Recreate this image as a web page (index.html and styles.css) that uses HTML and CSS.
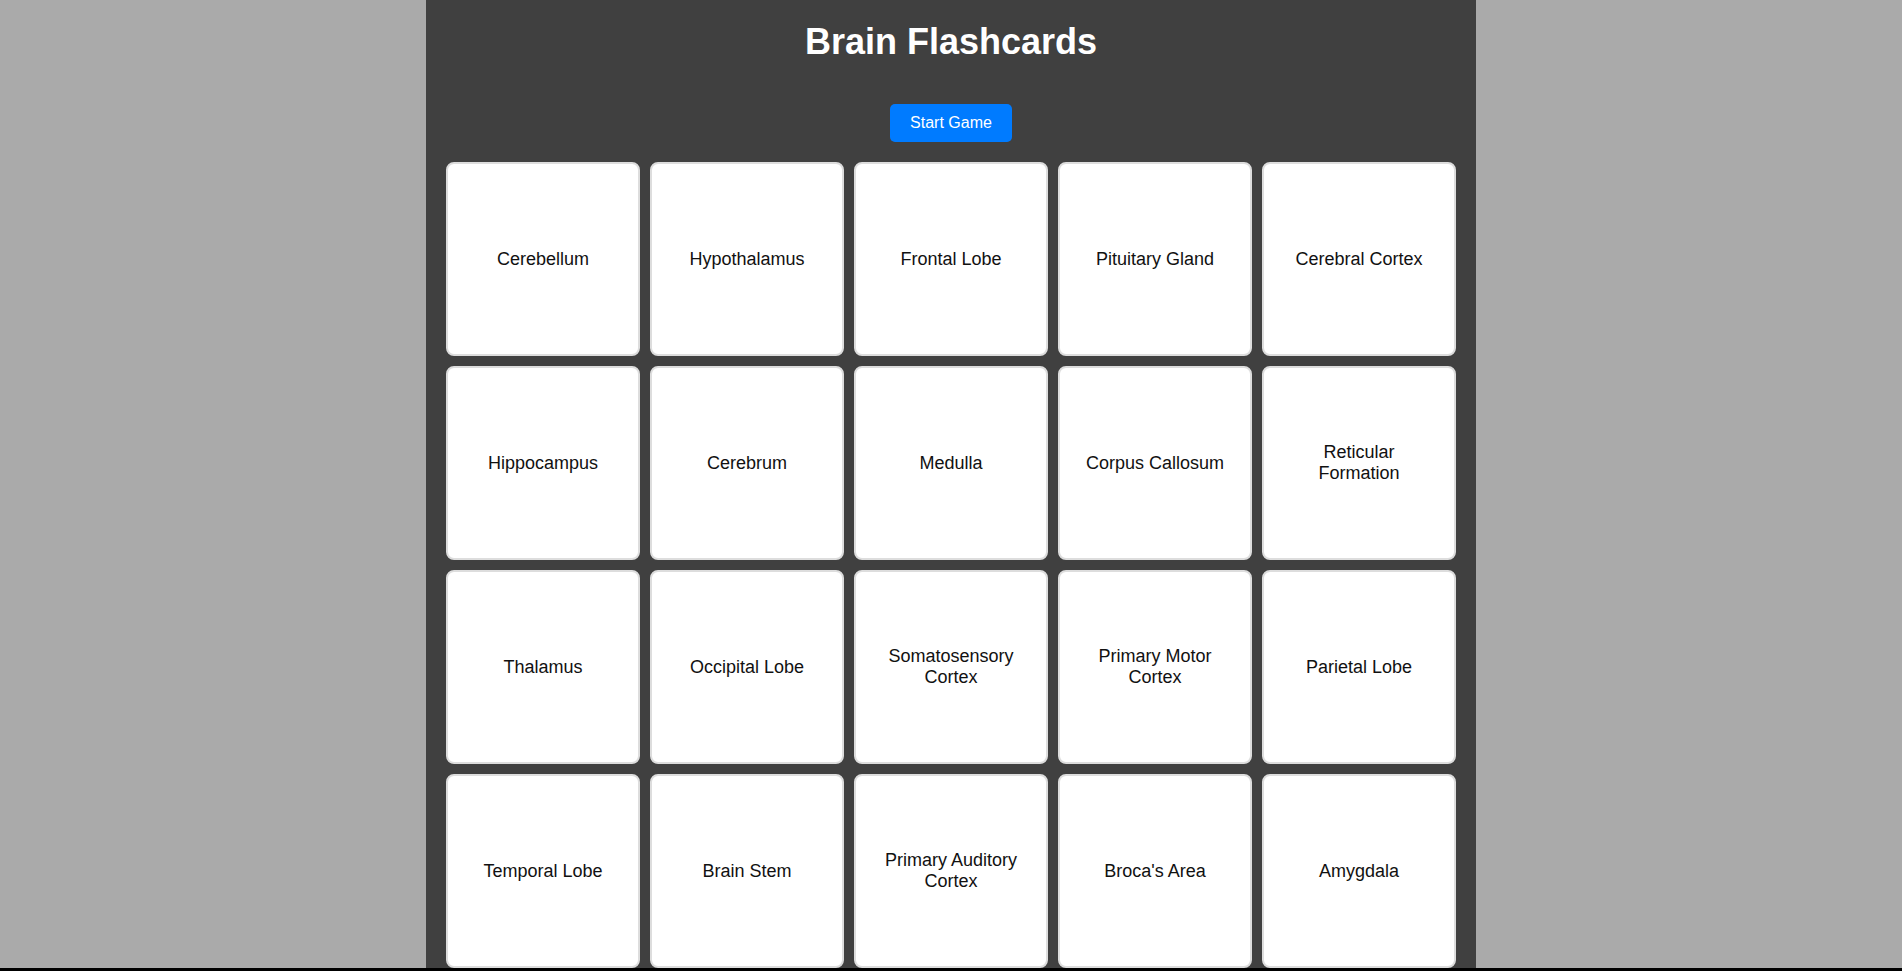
FILE: index.html
```html
<!DOCTYPE html>
<html lang="en">
<head>
<meta charset="utf-8">
<title>Brain Flashcards</title>
<link rel="stylesheet" href="styles.css">
</head>
<body>
<div class="container">
  <h1 class="title">Brain Flashcards</h1>
  <div class="controls">
    <button class="start-btn" type="button">Start Game</button>
  </div>
  <div class="grid">
    <div class="card">Cerebellum</div>
    <div class="card">Hypothalamus</div>
    <div class="card">Frontal Lobe</div>
    <div class="card">Pituitary Gland</div>
    <div class="card">Cerebral Cortex</div>
    <div class="card">Hippocampus</div>
    <div class="card">Cerebrum</div>
    <div class="card">Medulla</div>
    <div class="card">Corpus Callosum</div>
    <div class="card">Reticular Formation</div>
    <div class="card">Thalamus</div>
    <div class="card">Occipital Lobe</div>
    <div class="card">Somatosensory Cortex</div>
    <div class="card">Primary Motor Cortex</div>
    <div class="card">Parietal Lobe</div>
    <div class="card">Temporal Lobe</div>
    <div class="card">Brain Stem</div>
    <div class="card">Primary Auditory Cortex</div>
    <div class="card">Broca's Area</div>
    <div class="card">Amygdala</div>
  </div>
</div>
</body>
</html>
```

FILE: styles.css
```css
html {
  background: #000;
}

body {
  margin: 0;
  background: #aaaaaa;
  font-family: "Liberation Sans", Arial, sans-serif;
}

.container {
  width: 1050px;
  margin: 0 auto;
  box-sizing: border-box;
  padding: 21px 20px 0;
  background: #404040;
}

.title {
  margin: 0;
  font-size: 36px;
  font-weight: bold;
  color: #fff;
  text-align: center;
  line-height: 41px;
}

.controls {
  display: flex;
  justify-content: center;
  margin-top: 42px;
}

.start-btn {
  font-family: "Liberation Sans", Arial, sans-serif;
  font-size: 16px;
  line-height: 18px;
  padding: 10px 20px;
  color: #fff;
  background: #007bff;
  border: none;
  border-radius: 5px;
  cursor: pointer;
}

.grid {
  margin-top: 20px;
  display: grid;
  grid-template-columns: repeat(5, 1fr);
  gap: 10px;
}

.card {
  box-sizing: border-box;
  height: 194px;
  padding: 20px;
  background: #fff;
  border: 2px solid #dddddd;
  border-radius: 8px;
  display: flex;
  align-items: center;
  justify-content: center;
  text-align: center;
  font-size: 18px;
  color: #111;
}
```
